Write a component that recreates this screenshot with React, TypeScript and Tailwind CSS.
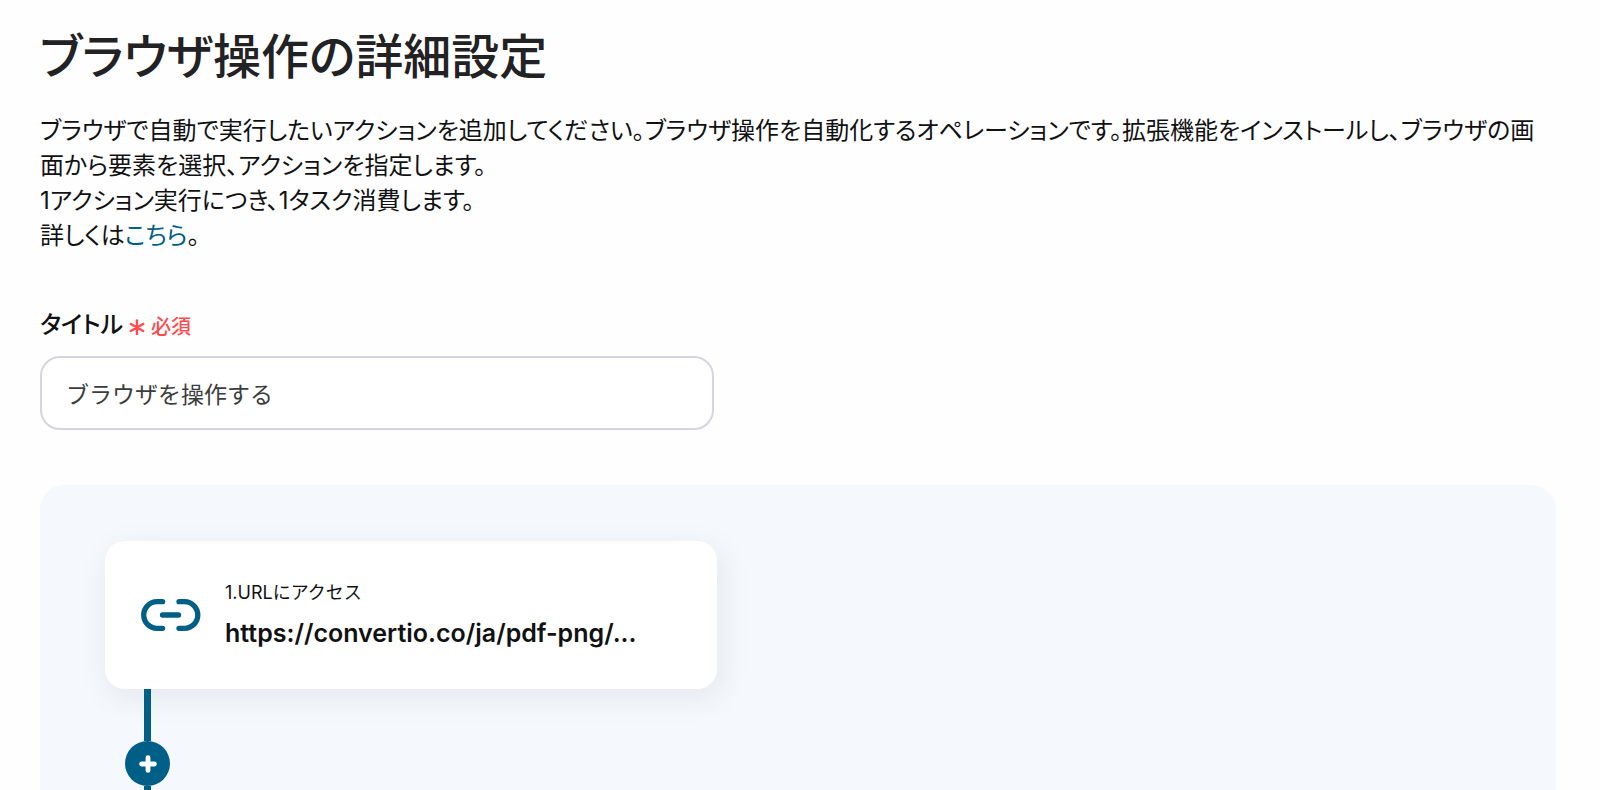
import { useState } from "react";
import type { ReactNode } from "react";

type Action = {
  id: number;
  label: string;
  value: string;
  icon: ReactNode;
};

function LinkIcon() {
  return (
    <svg
      className="h-8 w-15 shrink-0"
      viewBox="0 0 60 32"
      fill="none"
      stroke="#005f86"
      strokeWidth="5.3"
      strokeLinecap="round"
      aria-hidden="true"
    >
      <path d="M21.6 2.7H16a13.3 13.3 0 0 0 0 26.6h5.6" />
      <path d="M38 2.7h5.5a13.3 13.3 0 0 1 0 26.6H38" />
      <path d="M21.5 16h16" />
    </svg>
  );
}

function PlusIcon() {
  return (
    <svg
      className="h-5 w-5"
      viewBox="0 0 20 20"
      fill="none"
      stroke="#fff"
      strokeWidth="4.8"
      strokeLinecap="round"
      aria-hidden="true"
    >
      <path d="M10 3.6v12.8M3.6 10h12.8" />
    </svg>
  );
}

const actions: Action[] = [
  {
    id: 1,
    label: "URLにアクセス",
    value: "https://convertio.co/ja/pdf-png/...",
    icon: <LinkIcon />,
  },
];

function ActionCard({ action }: { action: Action }) {
  return (
    <div className="flex w-full max-w-[612px] items-center gap-6 rounded-[20px] bg-white px-9 py-[34px] shadow-[4px_8px_32px_rgba(30,30,50,0.08)]">
      {action.icon}
      <div className="min-w-0">
        <p className="text-[18px] leading-9">
          {action.id}.{action.label}
        </p>
        <p className="truncate text-[25px] leading-11 font-semibold">
          {action.value}
        </p>
      </div>
    </div>
  );
}

function AddStep() {
  return (
    <div className="ml-5 flex w-[45px] flex-col items-center">
      <div className="h-13 w-[7px] bg-[#005f86]" />
      <button
        type="button"
        aria-label="アクションを追加"
        className="flex h-[45px] w-[45px] items-center justify-center rounded-full bg-[#005f86]"
      >
        <PlusIcon />
      </button>
      <div className="h-13 w-[7px] bg-[#005f86]" />
    </div>
  );
}

export default function App() {
  const [title, setTitle] = useState("ブラウザを操作する");

  return (
    <main className="h-screen overflow-hidden bg-[#fefefe] pt-[21px] pr-11 pl-10 font-[Inter,'Noto_Sans_CJK_JP',sans-serif] text-[#111114]">
      <h1 className="text-[48px] leading-[72px] font-medium text-[#222124] [font-feature-settings:'palt']">
        ブラウザ操作の詳細設定
      </h1>
      <div className="mt-5 text-[24px] leading-[35px] [font-feature-settings:'palt']">
        <p>
          ブラウザで自動で実行したいアクションを追加してください。ブラウザ操作を自動化するオペレーションです。拡張機能をインストールし、ブラウザの画面から要素を選択、アクションを指定します。
        </p>
        <p>1アクション実行につき、1タスク消費します。</p>
        <p>
          詳しくは
          <a href="#help" className="text-[#005f86]">
            こちら
          </a>
          。
        </p>
      </div>

      <div className="mt-[50px] flex items-center gap-1.5 [font-feature-settings:'palt']">
        <label htmlFor="title" className="text-[24px] leading-10 font-medium">
          タイトル
        </label>
        <span className="flex items-center gap-1.5 pt-1 text-[20px] leading-10 font-medium text-[#ff4b4f]">
          <svg
            className="h-4 w-4"
            viewBox="0 0 16 16"
            stroke="currentColor"
            strokeWidth="2.4"
            strokeLinecap="round"
            aria-hidden="true"
          >
            <path d="M8 1.5v14M1.8 5l12.4 7M14.2 5L1.8 12" />
          </svg>
          必須
        </span>
      </div>
      <input
        id="title"
        type="text"
        required
        value={title}
        onChange={(e) => setTitle(e.target.value)}
        className="mt-[9px] block h-[74px] w-full max-w-[674px] rounded-[20px] border-2 border-[#d4d5e0] bg-white px-6 text-[23px] text-[#3d3d40] outline-none"
      />

      <section className="mt-[55px] rounded-3xl bg-[#f5f9fd] px-[65px] pt-14 pb-16">
        {actions.map((action) => (
          <div key={action.id}>
            <ActionCard action={action} />
            <AddStep />
          </div>
        ))}
      </section>
    </main>
  );
}
